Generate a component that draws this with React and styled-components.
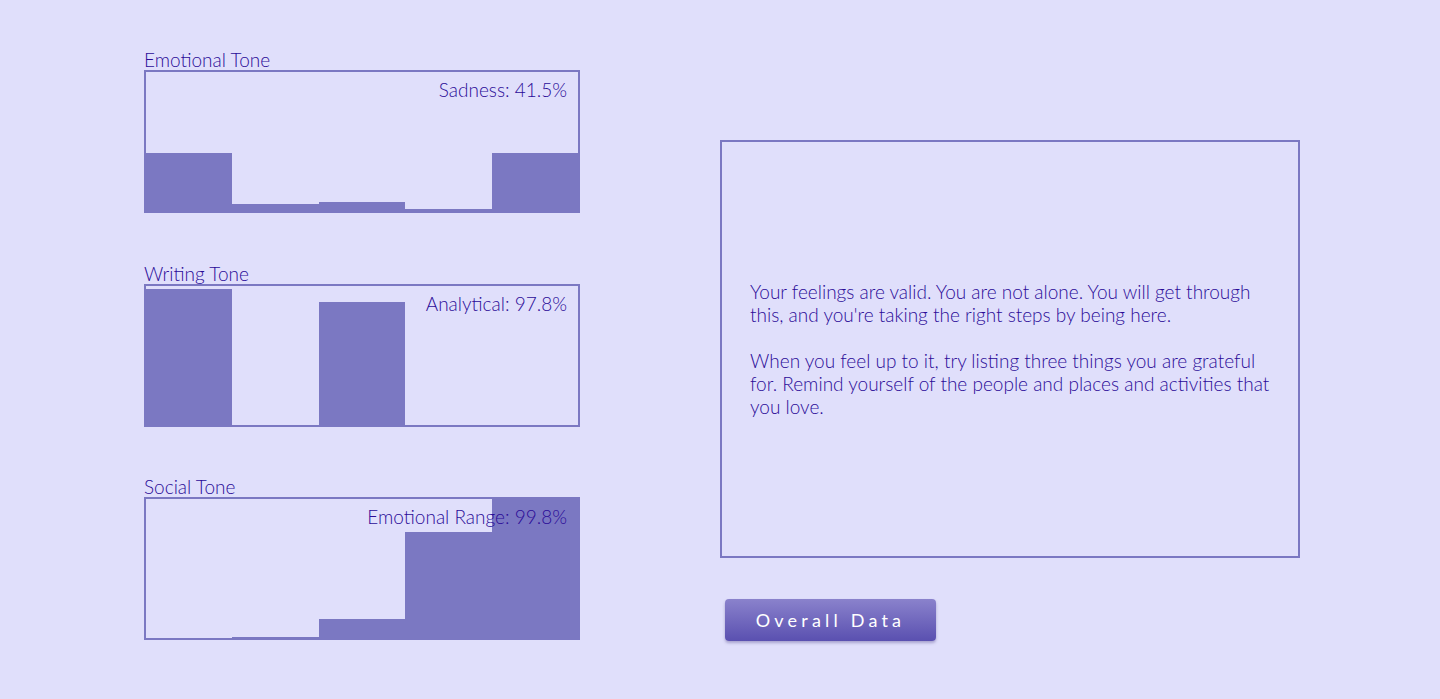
import React from "react";
import styled, { createGlobalStyle } from "styled-components";

const Global = createGlobalStyle`
  html, body { margin: 0; padding: 0; background: #e0dffb; }
  body { font-family: Lato, "Noto Sans", sans-serif; font-weight: 300; color: #2b0c98; }
`;

const Page = styled.div`
  width: 1440px;
  height: 699px;
  box-sizing: border-box;
  display: flex;
  align-items: flex-end;
  padding: 0 140px 58px 144px;
  gap: 140px;
`;

const LeftCol = styled.div`
  width: 436px;
  margin-bottom: 1px;
  display: flex;
  flex-direction: column;
  gap: 49.5px;
`;

const Chart = styled.section`
  display: flex;
  flex-direction: column;
`;

const Title = styled.div`
  font-size: 19px;
  line-height: 21px;
  height: 21px;
`;

const Box = styled.div`
  position: relative;
  height: 143px;
  box-sizing: border-box;
  border: 2px solid #7b78c2;
  display: flex;
  align-items: flex-end;
`;

const Bar = styled.div`
  flex: 1;
  background: #7b78c2;
`;

const Label = styled.div`
  position: absolute;
  top: 7px;
  right: 11px;
  font-size: 19px;
  line-height: 22px;
`;

const RightCol = styled.div`
  width: 580px;
  display: flex;
  flex-direction: column;
  gap: 41px;
`;

const MessageBox = styled.div`
  height: 418px;
  box-sizing: border-box;
  border: 2px solid #7b78c2;
  padding: 0 28px;
  display: flex;
  flex-direction: column;
  justify-content: center;
  gap: 23px;
`;

const Para = styled.p`
  margin: 0;
  font-size: 19px;
  line-height: 23px;
`;

const Button = styled.button`
  margin-left: 5px;
  width: 211px;
  height: 42px;
  border: none;
  border-radius: 4px;
  background: linear-gradient(#8a82cc, #5a50b0);
  box-shadow: 0 2px 3px rgba(60, 50, 120, 0.35);
  color: #fff;
  font-family: Lato, "Noto Sans", sans-serif;
  font-weight: 400;
  font-size: 18px;
  letter-spacing: 4.2px;
  padding: 0;
  cursor: pointer;
`;

const charts = [
  { title: "Emotional Tone", label: "Sadness: 41.5%", values: [41.5, 5, 6.5, 1.5, 41.5] },
  { title: "Writing Tone", label: "Analytical: 97.8%", values: [97.8, 0, 88.5, 0, 0] },
  { title: "Social Tone", label: "Emotional Range: 99.8%", values: [0, 1, 14, 76, 99.8] },
];

export default function App() {
  return (
    <>
      <Global />
      <Page>
        <LeftCol>
          {charts.map((c) => (
            <Chart key={c.title}>
              <Title>{c.title}</Title>
              <Box>
                {c.values.map((v, i) => (
                  <Bar key={i} style={{ height: `${Math.min(v, 100)}%` }} />
                ))}
                <Label>{c.label}</Label>
              </Box>
            </Chart>
          ))}
        </LeftCol>
        <RightCol>
          <MessageBox>
            <Para>
              Your feelings are valid. You are not alone. You will get through this, and you're taking the right steps by being here.
            </Para>
            <Para>
              When you feel up to it, try listing three things you are grateful for. Remind yourself of the people and places and activities that you love.
            </Para>
          </MessageBox>
          <Button>Overall Data</Button>
        </RightCol>
      </Page>
    </>
  );
}
